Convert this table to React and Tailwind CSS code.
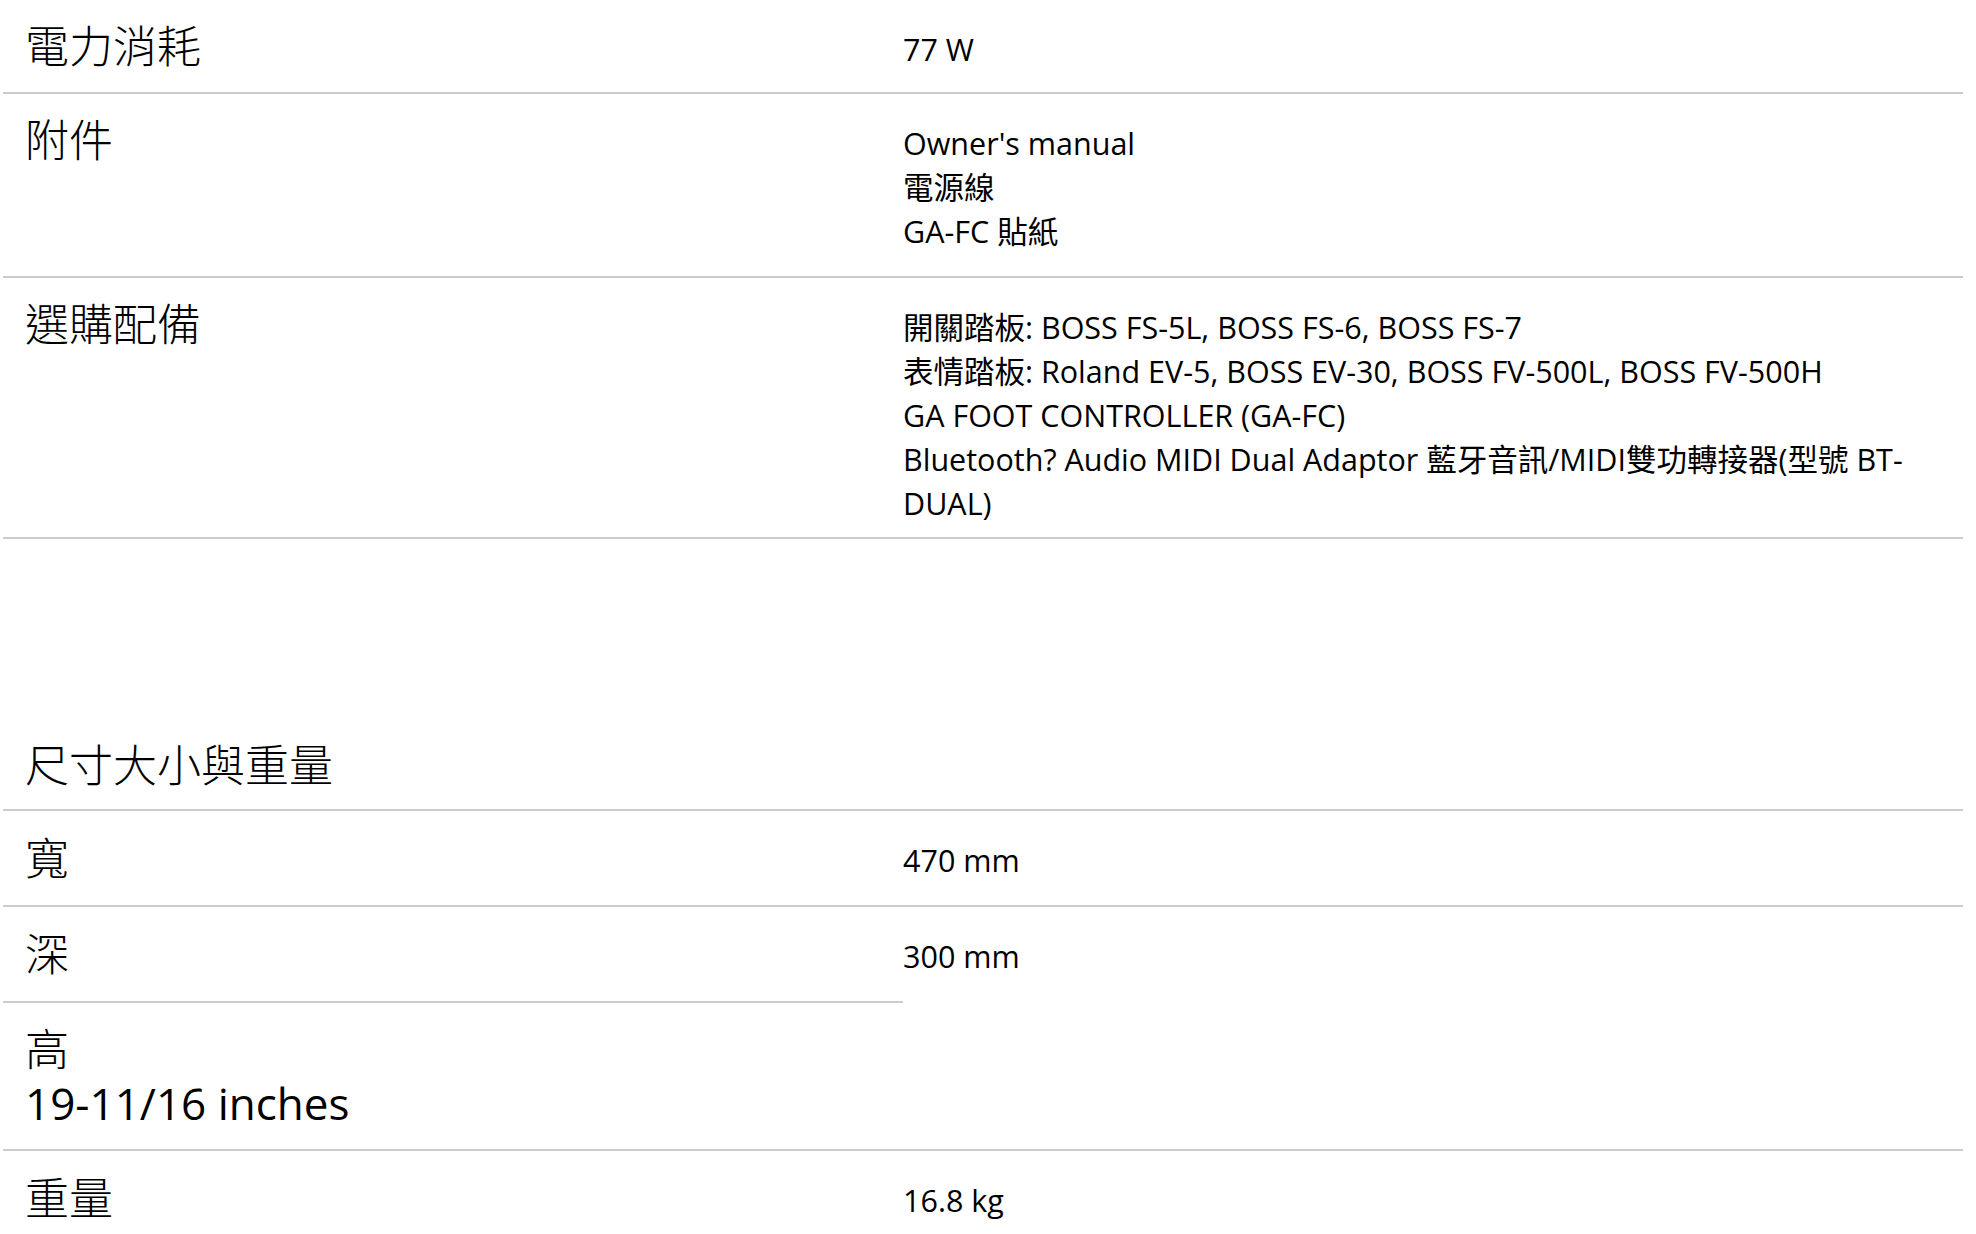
import React from "react";

const font = "font-['Open_Sans','Noto_Sans_CJK_TC',sans-serif]";

const Label = ({ children, className = "" }) => (
  <dt
    className={`border-b-2 border-[#cccccc] pl-[22px] text-[44px] font-light ${className}`}
  >
    {children}
  </dt>
);

const Value = ({ lines, className = "" }) => (
  <dd
    className={`flex-1 border-b-2 border-[#cccccc] pt-[27px] text-[30.5px] leading-[44px] ${className}`}
  >
    {lines.map((line, i) => (
      <div key={i}>{line}</div>
    ))}
  </dd>
);

const SpecRow = ({ label, lines, labelClass, valueClass }) => (
  <div className="flex">
    <div className="flex w-[900px] shrink-0 flex-col">
      <Label className={`flex-1 leading-[52px] ${labelClass}`}>{label}</Label>
    </div>
    <Value lines={lines} className={valueClass} />
  </div>
);

export default function App() {
  return (
    <div className={`min-h-screen bg-white text-black ${font}`}>
      <div className="ml-[3px] w-[1960px]">
        <dl>
          <SpecRow
            label="電力消耗"
            lines={["77 W"]}
            labelClass="py-[20px]"
            valueClass="pb-[21px]"
          />
          <SpecRow
            label="附件"
            lines={["Owner's manual", "電源線", "GA-FC 貼紙"]}
            labelClass="py-[20px]"
            valueClass="pb-[23px]"
          />
          <SpecRow
            label="選購配備"
            lines={[
              "開關踏板: BOSS FS-5L, BOSS FS-6, BOSS FS-7",
              "表情踏板: Roland EV-5, BOSS EV-30, BOSS FV-500L, BOSS FV-500H",
              "GA FOOT CONTROLLER (GA-FC)",
              "Bluetooth? Audio MIDI Dual Adaptor 藍牙音訊/MIDI雙功轉接器(型號 BT-",
              "DUAL)",
            ]}
            labelClass="py-[20px]"
            valueClass="pb-[12px]"
          />
        </dl>

        <h2 className="mt-[200px] border-b-2 border-[#cccccc] pb-[18px] pl-[22px] text-[44px] font-light leading-[52px]">
          尺寸大小與重量
        </h2>

        <dl>
          <SpecRow
            label="寬"
            lines={["470 mm"]}
            labelClass="py-[21px]"
            valueClass="pb-[23px]"
          />
          <div className="flex">
            <div className="flex w-[900px] shrink-0 flex-col">
              <Label className="py-[21px] leading-[52px]">深</Label>
              <Label className="py-[19px] leading-[54px]">
                高
                <br />
                <span className="font-normal">19-11/16 inches</span>
              </Label>
            </div>
            <Value lines={["300 mm"]} />
          </div>
          <SpecRow
            label="重量"
            lines={["16.8 kg"]}
            labelClass="py-[21px]"
            valueClass="pb-[23px]"
          />
        </dl>
      </div>
    </div>
  );
}
